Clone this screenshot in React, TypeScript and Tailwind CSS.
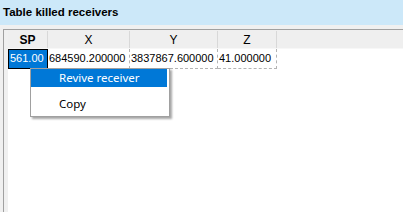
import React from 'react'

const cols = [
  { label: 'SP', w: 'w-[40px]', bold: true },
  { label: 'X', w: 'w-[82px]' },
  { label: 'Y', w: 'w-[88px]' },
  { label: 'Z', w: 'w-[59px]' },
]

const row = ['561.00', '684590.200000', '3837867.600000', '41.000000']

export default function App() {
  return (
    <div className="relative w-[403px] h-[212px] overflow-hidden bg-[#f0f0f0] text-black font-['Liberation_Sans',Arial,sans-serif]">
      {/* Title */}
      <div className="h-[25px] bg-[#cce8f9] flex items-center pl-[3px] text-[11.5px] font-bold">
        Table killed receivers
      </div>

      {/* Table frame */}
      <div className="mt-[4px] ml-[3px] h-[183px] border-l border-t border-[#a0a0a0] flex">
        {/* vertical header strip */}
        <div className="w-[4px] shrink-0 bg-[#f0f0f0]" />
        <div className="flex-1 flex flex-col bg-white">
          {/* header row */}
          <div className="h-[19px] flex bg-[#efefef] border-b border-[#f7f7f7] text-[12px] pt-[1px]">
            {cols.map((c) => (
              <div
                key={c.label}
                className={`${c.w} shrink-0 flex items-center justify-center border-r border-[#d8d8d8] ${c.bold ? 'font-bold' : ''}`}
              >
                {c.label}
              </div>
            ))}
            <div className="flex-1" />
          </div>

          {/* data row */}
          <div className="h-[20px] flex text-[11px]">
            {row.map((v, i) => (
              <div
                key={i}
                className={`${cols[i].w} shrink-0 overflow-hidden whitespace-nowrap flex items-center border-r border-b border-dashed border-[#b4b4b4] ${
                  i === 0 ? 'bg-[#0078d7] text-white outline outline-1 -outline-offset-1 outline-black pl-[2px]' : 'pl-[1px]'
                }`}
              >
                {v}
              </div>
            ))}
          </div>
        </div>
      </div>

      {/* Context menu */}
      <div className="absolute left-[30px] top-[68px] w-[140px] h-[49px] bg-white border border-[#a0a0a0] shadow-[2px_2px_2px_rgba(0,0,0,0.35)] font-['Noto_Sans','Open_Sans',sans-serif] text-[11.5px]">
        <div className="h-[18px] mr-[2px] bg-[#0078d7] text-white flex items-center pl-[28px]">
          Revive receiver
        </div>
        <div className="h-[18px] mt-[8px] flex items-center pl-[28px]">Copy</div>
      </div>
    </div>
  )
}
